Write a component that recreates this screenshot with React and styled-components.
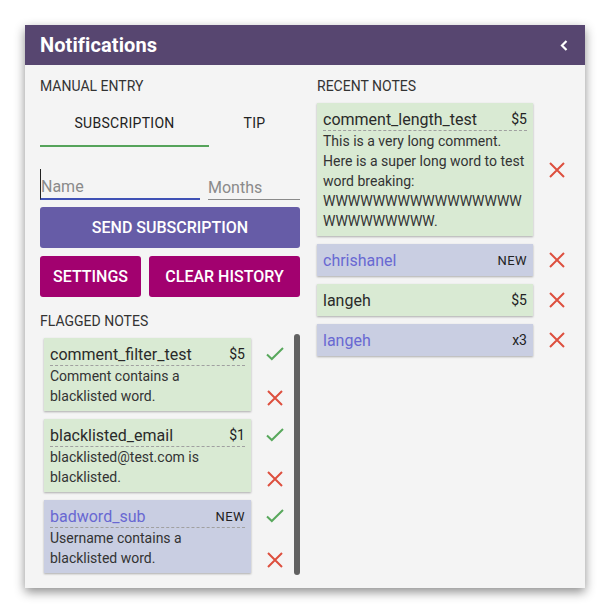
import React from "react";
import styled, { createGlobalStyle } from "styled-components";

const Global = createGlobalStyle`
  html, body { margin: 0; padding: 0; background: #ffffff; }
  body { font-family: Roboto, "Noto Sans", "Liberation Sans", sans-serif; }
  * { box-sizing: border-box; }
`;

const Page = styled.div`
  padding: 25px;
  width: 610px;
`;

const Panel = styled.section`
  width: 560px;
  background: #f4f4f4;
  box-shadow: 0 4px 10px rgba(0, 0, 0, 0.45);
`;

const Header = styled.header`
  height: 40px;
  background: #574670;
  display: flex;
  align-items: center;
  justify-content: space-between;
  padding: 0 17px 0 15px;
  color: #fff;
`;

const Title = styled.h1`
  margin: 0;
  font-size: 20px;
  font-weight: 700;
  letter-spacing: 0.1px;
`;

const Body = styled.div`
  display: grid;
  grid-template-columns: 260px 1fr;
  column-gap: 17px;
  padding: 13px 15px 13px 15px;
`;

const Column = styled.div`
  display: flex;
  flex-direction: column;
`;

const SectionLabel = styled.div`
  font-size: 14px;
  line-height: 16px;
  color: #333;
  text-transform: uppercase;
  margin-top: ${(p) => p.$mt || 0}px;
`;

const Tabs = styled.div`
  display: flex;
  margin-top: 6px;
`;

const Tab = styled.div`
  flex: 1 1 auto;
  height: 47px;
  display: flex;
  align-items: center;
  justify-content: center;
  font-size: 14px;
  letter-spacing: 0.3px;
  color: #222;
  text-transform: uppercase;
  border-bottom: 2px solid ${(p) => (p.$active ? "#55a35a" : "transparent")};
`;

const InputRow = styled.div`
  display: flex;
  gap: 8px;
  margin-top: 22px;
`;

const Input = styled.input`
  height: 31px;
  width: ${(p) => p.$w}px;
  border: none;
  border-bottom: ${(p) => (p.$focus ? "2px solid #3f51b5" : "1px solid #8a8a8a")};
  background: transparent;
  font-family: Roboto, "Liberation Sans", sans-serif;
  font-size: 16px;
  padding: 6px 0 0 0;
  color: #333;
  outline: none;
  border-left: ${(p) => (p.$focus ? "1px solid #222" : "none")};
  &::placeholder { color: #8a8a8a; }
`;

const Button = styled.button`
  border: none;
  border-radius: 3px;
  height: 41px;
  background: ${(p) => p.$bg};
  color: #fff;
  font-family: Roboto, "Liberation Sans", sans-serif;
  font-size: 16px;
  font-weight: 500;
  text-transform: uppercase;
  padding: 0 12px;
  flex: ${(p) => p.$flex || "none"};
  width: ${(p) => (p.$w ? `${p.$w}px` : "auto")};
  margin-top: ${(p) => p.$mt || 0}px;
`;

const ButtonRow = styled.div`
  display: flex;
  gap: 8px;
  margin-top: 8px;
`;

const FlaggedArea = styled.div`
  display: flex;
  margin-top: 5px;
  height: 241px;
`;

const NoteList = styled.div`
  flex: 1;
  display: flex;
  flex-direction: column;
  gap: 8px;
  padding: ${(p) => p.$pad || "0"};
`;

const ScrollThumb = styled.div`
  width: 6px;
  background: #616161;
  border-radius: 3px;
`;

const NoteRow = styled.div`
  display: grid;
  grid-template-columns: ${(p) => p.$cardW}px 1fr;
`;

const Card = styled.div`
  background: ${(p) => (p.$kind === "new" ? "#c9cee2" : "#d9ead3")};
  padding: 5px 6px;
  box-shadow: 0 1px 2px rgba(0, 0, 0, 0.3);
`;

const CardHead = styled.div`
  display: flex;
  justify-content: space-between;
  align-items: center;
  height: ${(p) => (p.$divided ? 23 : 22)}px;
  border-bottom: ${(p) => (p.$divided ? "1px dashed #a0a0a0" : "none")};
`;

const CardName = styled.span`
  font-size: 16px;
  color: ${(p) => (p.$kind === "new" ? "#6868d2" : "#2a2a2a")};
`;

const CardTag = styled.span`
  font-size: ${(p) => (p.$small ? 13 : 14)}px;
  letter-spacing: ${(p) => (p.$small ? 0.4 : 0)}px;
  color: #222;
`;

const CardText = styled.div`
  font-size: 14px;
  line-height: 20px;
  color: #333;
  overflow-wrap: anywhere;
`;

const Actions = styled.div`
  display: flex;
  flex-direction: column;
  align-items: center;
  justify-content: ${(p) => (p.$split ? "space-between" : "center")};
  padding: ${(p) => p.$pad};
`;

const IconBtn = styled.span`
  display: flex;
  align-items: center;
  justify-content: center;
  width: 20px;
  height: 18px;
`;

const Check = () => (
  <svg width="18" height="14" viewBox="0 0 18 14">
    <polyline points="1,7.5 5.8,12 17,1" fill="none" stroke="#58a85c" strokeWidth="2" />
  </svg>
);

const Cross = () => (
  <svg width="16" height="16" viewBox="0 0 16 16">
    <path d="M1 1 L15 15 M15 1 L1 15" fill="none" stroke="#dd4f3e" strokeWidth="2" />
  </svg>
);

const Chevron = () => (
  <svg width="8" height="11" viewBox="0 0 8 11">
    <polyline points="6.5,1 2,5.5 6.5,10" fill="none" stroke="#fff" strokeWidth="2.2" />
  </svg>
);

const flagged = [
  { name: "comment_filter_test", tag: "$5", text: "Comment contains a blacklisted word.", kind: "paid" },
  { name: "blacklisted_email", tag: "$1", text: "blacklisted@test.com is blacklisted.", kind: "paid" },
  { name: "badword_sub", tag: "NEW", text: "Username contains a blacklisted word.", kind: "new" },
];

const recent = [
  {
    name: "comment_length_test",
    tag: "$5",
    kind: "paid",
    text:
      "This is a very long comment. Here is a super long word to test word breaking: " +
      "W".repeat(25) +
      ".",
  },
  { name: "chrishanel", tag: "NEW", kind: "new" },
  { name: "langeh", tag: "$5", kind: "paid" },
  { name: "langeh", tag: "x3", kind: "new" },
];

const NoteCard = ({ note }) => (
  <Card $kind={note.kind}>
    <CardHead $divided={!!note.text}>
      <CardName $kind={note.kind}>{note.name}</CardName>
      <CardTag $small={note.tag === "NEW"}>{note.tag}</CardTag>
    </CardHead>
    {note.text && <CardText>{note.text}</CardText>}
  </Card>
);

export default function App() {
  return (
    <Page>
      <Global />
      <Panel>
        <Header>
          <Title>Notifications</Title>
          <Chevron />
        </Header>
        <Body>
          <Column>
            <SectionLabel>Manual Entry</SectionLabel>
            <Tabs>
              <Tab $active>Subscription</Tab>
              <Tab>Tip</Tab>
            </Tabs>
            <InputRow>
              <Input $w={160} $focus placeholder="Name" />
              <Input $w={92} placeholder="Months" />
            </InputRow>
            <Button $bg="#665ca7" $mt={7}>Send Subscription</Button>
            <ButtonRow>
              <Button $bg="#a2016f" $w={101}>Settings</Button>
              <Button $bg="#a2016f" $flex="1">Clear History</Button>
            </ButtonRow>
            <SectionLabel $mt={16}>Flagged Notes</SectionLabel>
            <FlaggedArea>
              <NoteList $pad="4px 0 4px 4px">
                {flagged.map((n) => (
                  <NoteRow key={n.name} $cardW={207}>
                    <NoteCard note={n} />
                    <Actions $split $pad="7px 0 4px 4px">
                      <IconBtn><Check /></IconBtn>
                      <IconBtn><Cross /></IconBtn>
                    </Actions>
                  </NoteRow>
                ))}
              </NoteList>
              <ScrollThumb />
            </FlaggedArea>
          </Column>
          <Column>
            <SectionLabel>Recent Notes</SectionLabel>
            <NoteList $pad="9px 0 0 0">
              {recent.map((n, i) => (
                <NoteRow key={i} $cardW={216}>
                  <NoteCard note={n} />
                  <Actions $pad="0 0 0 11px">
                    <IconBtn><Cross /></IconBtn>
                  </Actions>
                </NoteRow>
              ))}
            </NoteList>
          </Column>
        </Body>
      </Panel>
    </Page>
  );
}
